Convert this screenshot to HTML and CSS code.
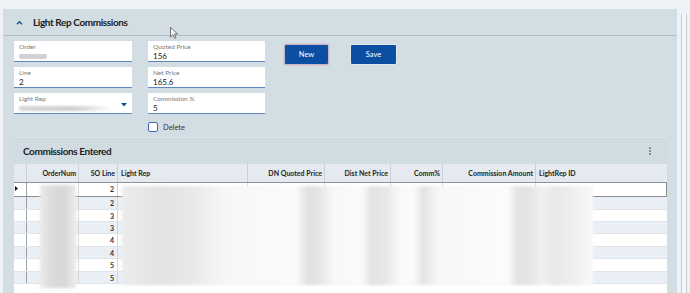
FILE: index.html
```html
<!DOCTYPE html>
<html lang="en">
<head>
  <meta charset="UTF-8">
  <title>Light Rep Commissions</title>
  <link rel="stylesheet" href="styles.css">
</head>
<body>
  <div class="page">
    <section class="panel">
      <header class="panel-head">
        <svg class="chev" viewBox="0 0 8 6"><path d="M1 5L4 2L7 5" fill="none" stroke="#1d4f8f" stroke-width="1.6"/></svg>
        <h1>Light Rep Commissions</h1>
        <svg class="cursor" viewBox="0 0 8 12"><path d="M0.5 0.5V10L3 7.6L4.6 11.3L6 10.7L4.4 7H7.6Z" fill="#fff" stroke="#555" stroke-width="0.8"/></svg>
      </header>
      <div class="panel-body">
        <div class="form">
          <div class="col col-left">
            <div class="field"><span class="label">Order</span><span class="value"><span class="redact redact-order"></span></span></div>
            <div class="field"><span class="label">Line</span><span class="value">2</span></div>
            <div class="field field-select">
              <span class="label">Light Rep</span><span class="value"><span class="redact redact-rep"></span></span>
              <svg class="caret" viewBox="0 0 6 4"><path d="M0 0H6L3 3.5Z" fill="#1d4f8f"/></svg>
            </div>
          </div>
          <div class="col col-right">
            <div class="field"><span class="label">Quoted Price</span><span class="value">156</span></div>
            <div class="field"><span class="label">Net Price</span><span class="value">165.6</span></div>
            <div class="field"><span class="label">Commission %</span><span class="value">5</span></div>
            <div class="check"><span class="box"></span>Delete</div>
          </div>
          <button class="btn btn-new">New</button>
          <button class="btn btn-save">Save</button>
        </div>

        <div class="card">
          <div class="card-head">
            <h2>Commissions Entered</h2>
            <svg class="kebab" viewBox="0 0 4 10"><circle cx="2" cy="1.3" r="1" fill="#333"/><circle cx="2" cy="5" r="1" fill="#333"/><circle cx="2" cy="8.7" r="1" fill="#333"/></svg>
          </div>
          <div class="grid">
            <div class="grow ghead">
              <div class="c"></div>
              <div class="c r">OrderNum</div>
              <div class="c r">SO Line</div>
              <div class="c">Light Rep</div>
              <div class="c r">DN Quoted Price</div>
              <div class="c r">Dist Net Price</div>
              <div class="c r">Comm%</div>
              <div class="c r">Commission Amount</div>
              <div class="c last">LightRep ID</div>
            </div>
            <div class="grow drow sel">
              <div class="c ind"><svg viewBox="0 0 3 5"><path d="M0 0L3 2.5L0 5Z" fill="#111"/></svg></div>
              <div class="c"></div><div class="c r num">2</div><div class="c"></div><div class="c"></div><div class="c"></div><div class="c"></div><div class="c"></div><div class="c last"></div>
            </div>
            <div class="grow drow alt">
              <div class="c ind"></div><div class="c"></div><div class="c r num">2</div><div class="c"></div><div class="c"></div><div class="c"></div><div class="c"></div><div class="c"></div><div class="c last"></div>
            </div>
            <div class="grow drow">
              <div class="c ind"></div><div class="c"></div><div class="c r num">3</div><div class="c"></div><div class="c"></div><div class="c"></div><div class="c"></div><div class="c"></div><div class="c last"></div>
            </div>
            <div class="grow drow alt">
              <div class="c ind"></div><div class="c"></div><div class="c r num">3</div><div class="c"></div><div class="c"></div><div class="c"></div><div class="c"></div><div class="c"></div><div class="c last"></div>
            </div>
            <div class="grow drow">
              <div class="c ind"></div><div class="c"></div><div class="c r num">4</div><div class="c"></div><div class="c"></div><div class="c"></div><div class="c"></div><div class="c"></div><div class="c last"></div>
            </div>
            <div class="grow drow alt">
              <div class="c ind"></div><div class="c"></div><div class="c r num">4</div><div class="c"></div><div class="c"></div><div class="c"></div><div class="c"></div><div class="c"></div><div class="c last"></div>
            </div>
            <div class="grow drow">
              <div class="c ind"></div><div class="c"></div><div class="c r num">5</div><div class="c"></div><div class="c"></div><div class="c"></div><div class="c"></div><div class="c"></div><div class="c last"></div>
            </div>
            <div class="grow drow alt">
              <div class="c ind"></div><div class="c"></div><div class="c r num">5</div><div class="c"></div><div class="c"></div><div class="c"></div><div class="c"></div><div class="c"></div><div class="c last"></div>
            </div>
            <div class="blur blur-order"></div>
            <div class="blur blur-rep"></div>
          </div>
        </div>
      </div>
    </section>
    <div class="scrollbar"></div>
  </div>
</body>
</html>
```

FILE: styles.css
```css
body {
  margin: 0;
  background: #eef1f5;
  font-family: Lato, "Open Sans", Arial, sans-serif;
  color: #222;
  overflow: hidden;
}
.page {
  display: flex;
  padding: 9px 0 0 3px;
  gap: 4px;
}
.panel {
  width: 674px;
  min-height: 300px;
  background: #d3dde4;
}
.panel-head {
  position: relative;
  height: 26px;
  border-bottom: 1px solid #b2bec7;
  display: flex;
  align-items: center;
  padding-left: 13px;
}
.chev {
  width: 7px;
  height: 5px;
  margin-right: 10px;
}
h1 {
  margin: 0;
  font-size: 10px;
  font-weight: 700;
  letter-spacing: -0.4px;
  color: #1c1c1c;
}
.cursor {
  position: absolute;
  left: 167px;
  top: 18px;
  width: 8px;
  height: 12px;
}
.panel-body {
  padding: 5px 10px 0 11px;
}
.form {
  display: flex;
  align-items: flex-start;
}
.col {
  display: flex;
  flex-direction: column;
  gap: 5px;
}
.col-left { width: 118px; margin-right: 16px; }
.col-right { width: 117px; margin-right: 19px; }
.field {
  position: relative;
  height: 21px;
  box-sizing: border-box;
  background: #fff;
  border-bottom: 1px solid #5f88c0;
  padding: 2px 5px 0 5px;
  display: flex;
  flex-direction: column;
}
.label {
  font-size: 6.5px;
  color: #7a7a7a;
  line-height: 8px;
}
.value {
  font-size: 8px;
  line-height: 10px;
  color: #1a1a1a;
}
.redact {
  display: inline-block;
  height: 5px;
  margin-top: 2px;
  border-radius: 2px;
}
.redact-order {
  width: 28px;
  background: #d2d2d2;
  filter: blur(0.6px);
}
.redact-rep {
  width: 94px;
  background: linear-gradient(to right, #d6d6d6 0%, #d0d0d0 60%, #fff 100%);
  filter: blur(0.8px);
}
.caret {
  position: absolute;
  right: 5px;
  top: 10px;
  width: 6px;
  height: 4px;
}
.check {
  display: flex;
  align-items: center;
  gap: 5px;
  margin-top: 3px;
  font-size: 7.5px;
  color: #333;
}
.box {
  width: 10px;
  height: 10px;
  box-sizing: border-box;
  border: 1.5px solid #3d6cab;
  border-radius: 2px;
  background: #fff;
}
.btn {
  height: 21px;
  margin-top: 3px;
  background: #0c4fa2;
  color: #fff;
  border: 1px solid #e3e8ee;
  border-radius: 2px;
  font-family: inherit;
  font-size: 7.5px;
  padding: 0;
}
.btn-new {
  width: 45px;
  margin-right: 21px;
  border-color: #c6b4c4;
  box-shadow: 0 0 0 1px #d9ccd6;
}
.btn-save { width: 47px; }

.card {
  margin-top: 5px;
  background: #fff;
  min-height: 160px;
}
.card-head {
  height: 27px;
  box-sizing: border-box;
  background: #d1dbe2;
  border-top: 1px solid #dde4ea;
  display: flex;
  align-items: center;
  justify-content: space-between;
  padding: 0 15px 0 9px;
}
h2 {
  margin: 0;
  font-size: 10px;
  font-weight: 700;
  letter-spacing: -0.4px;
  color: #1c1c1c;
}
.kebab {
  width: 4px;
  height: 8px;
}
.grid {
  position: relative;
}
.grow {
  display: grid;
  grid-template-columns: 13px 52px 39px 130px 77px 66px 52px 93px 1fr;
}
.c {
  border-right: 1px solid #c8d0d7;
  overflow: hidden;
  white-space: nowrap;
}
.c.last { border-right: none; }
.r { text-align: right; }
.ghead {
  height: 19px;
  box-sizing: border-box;
  background: #e4eaf0;
  border-bottom: 1px solid #8c949b;
}
.ghead .c {
  font-size: 7px;
  font-weight: 700;
  line-height: 18px;
  padding: 0 2px 0 3px;
  color: #1e1e1e;
}
.drow {
  height: 12.4px;
  box-sizing: border-box;
  border-bottom: 1px solid #dfe4e8;
  background: #fff;
}
.drow.alt { background: #e9eff4; }
.drow.sel {
  height: 14.3px;
  border: 1px solid #8d8d8d;
  border-top: none;
  border-left: none;
}
.drow .c { border-right-color: #d0d6dc; }
.drow .ind { border-right-color: #9aa2a8; }
.ind svg {
  width: 3px;
  height: 5px;
  margin: 3px 0 0 1px;
  display: block;
}
.num {
  font-size: 7px;
  font-weight: 700;
  line-height: 12px;
  padding-right: 3px;
  color: #333;
}
.blur {
  position: absolute;
  filter: blur(1.5px);
}
.blur-order {
  left: 26px;
  top: 21px;
  width: 36px;
  height: 103px;
  background: linear-gradient(to right, #ebebeb 0%, #dadada 35%, #d8d8d8 70%, #ececec 100%);
}
.blur-rep {
  left: 108px;
  top: 22px;
  width: 471px;
  height: 99px;
  background: linear-gradient(to right,
    #ececec 0%, #e2e2e2 8%, #ebebeb 16%, #f7f7f7 22%, #fafafa 37%,
    #e0e0e0 39.5%, #e6e6e6 42%, #f8f8f8 45%, #fafafa 51%,
    #e2e2e2 53%, #e8e8e8 56%, #f9f9f9 59%, #fafafa 62%,
    #e3e3e3 64%, #f7f7f7 67%, #fbfbfb 82%,
    #e2e2e2 84%, #e6e6e6 87%, #f1f1f1 89%, #e8e8e8 92%, #efefef 96%, #f9f9f9 100%);
}
.scrollbar {
  width: 4px;
  margin-top: 5px;
  height: 300px;
  background: #f5f6f8;
  border-left: 1px solid #c9ced3;
  border-right: 1px solid #c9ced3;
}
```
